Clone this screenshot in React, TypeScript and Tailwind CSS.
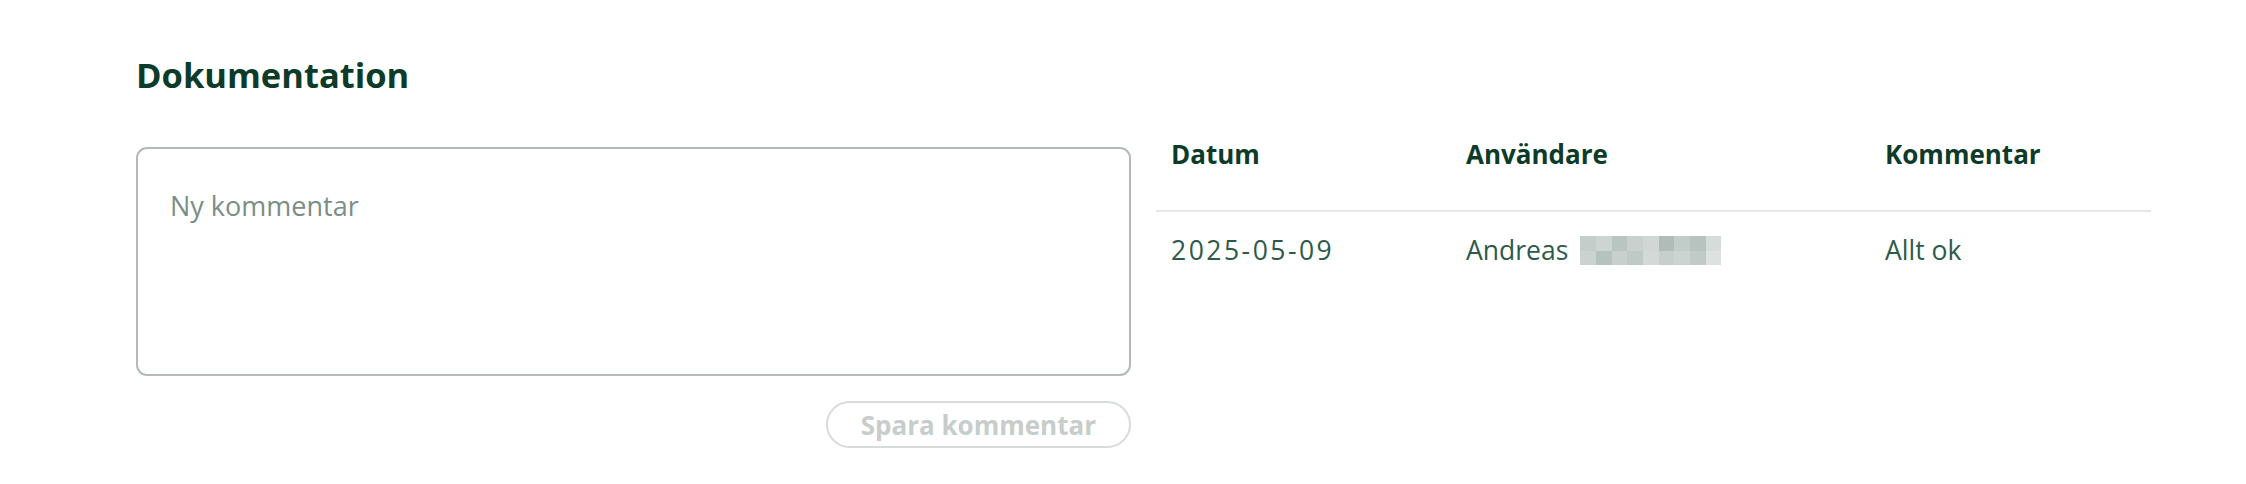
import { useState } from "react";

const blur = [
  ["#c3cdc9", "#cdd5d2", "#b9c5c0", "#c9d1ce", "#d0d7d4", "#afbcb7", "#c2ccc8", "#b7c3be", "#d6dcda"],
  ["#cbd3d0", "#b6c2bd", "#c7d0cc", "#bfc9c5", "#d2d9d6", "#c6cfcb", "#ccd4d1", "#c0cac6", "#dde2e0"],
];

function Blurred() {
  return (
    <span className="inline-grid grid-cols-9 grid-rows-2 w-[141px] h-[29px] align-middle ml-[12px] -mt-[4px]">
      {blur.flat().map((c, i) => (
        <span key={i} style={{ background: c }} />
      ))}
    </span>
  );
}

export default function App() {
  const [text, setText] = useState("");

  return (
    <div className="min-h-screen bg-white font-['Open_Sans',sans-serif] pl-[136px] pr-[95px] pt-[55px]">
      <h2 className="text-[34.5px] leading-[40px] font-bold text-[#0d3b2a]">Dokumentation</h2>

      <div className="mt-[32px] grid grid-cols-2 gap-x-[25px]">
        <div className="pt-[20px] flex flex-col items-end">
          <textarea
            value={text}
            onChange={(e) => setText(e.target.value)}
            placeholder="Ny kommentar"
            className="w-full h-[229px] resize-none rounded-[11px] border-2 border-[#b3bbb8] px-[32px] pt-[41px] text-[27px] leading-[32px] text-[#2e5a4a] placeholder:text-[#7b8d87] outline-none"
          />
          <button
            disabled
            className="mt-[25px] h-[47px] px-[33px] rounded-full border-2 border-[#d7dcda] text-[26px] font-bold text-[#c6cdca] leading-none"
          >
            Spara kommentar
          </button>
        </div>

        <div>
          <table className="w-full text-left">
            <thead>
              <tr className="border-b-2 border-[#e5e8e7]">
                <th className="h-[84px] align-top pt-[11px] pl-[15px] w-[295px] text-[26px] leading-[32px] font-bold text-[#0d3b2a]">Datum</th>
                <th className="h-[84px] align-top pt-[11px] pl-[15px] w-[419px] text-[26px] leading-[32px] font-bold text-[#0d3b2a]">Användare</th>
                <th className="h-[84px] align-top pt-[11px] pl-[15px] text-[26px] leading-[32px] font-bold text-[#0d3b2a]">Kommentar</th>
              </tr>
            </thead>
            <tbody>
              <tr className="text-[26.5px] leading-[32px] text-[#2e5a4a]">
                <td className="pt-[22px] pl-[15px] tracking-[2.5px]">2025-05-09</td>
                <td className="pt-[22px] pl-[15px]">
                  Andreas
                  <Blurred />
                </td>
                <td className="pt-[22px] pl-[15px]">Allt ok</td>
              </tr>
            </tbody>
          </table>
        </div>
      </div>
    </div>
  );
}
